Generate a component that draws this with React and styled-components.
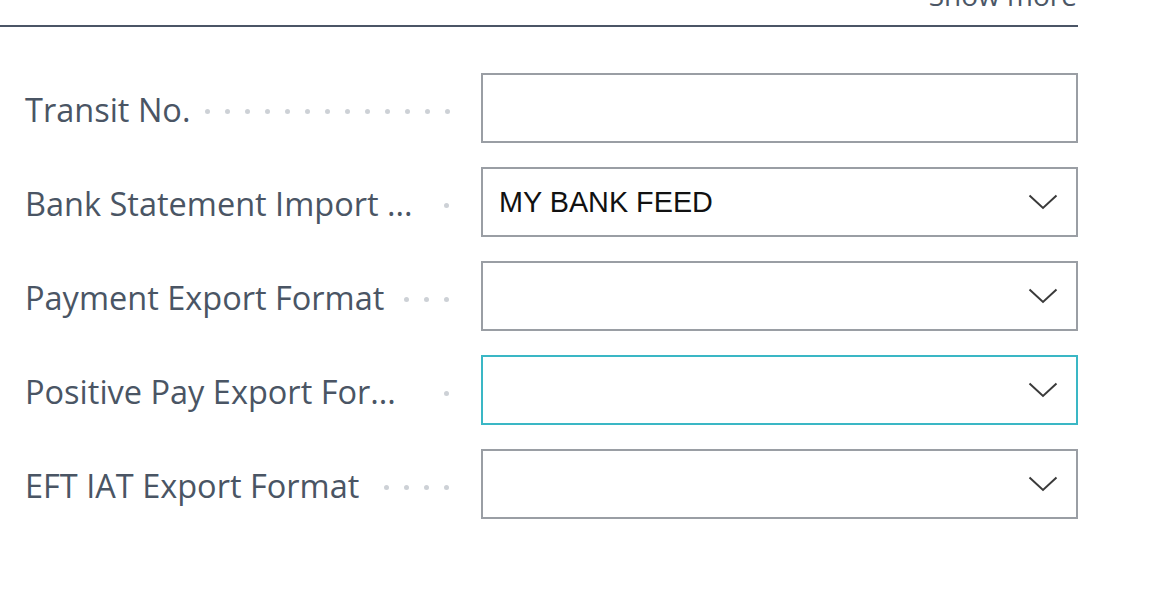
import React from "react";
import styled, { createGlobalStyle } from "styled-components";

const Global = createGlobalStyle`
  html, body { margin: 0; padding: 0; background: #ffffff; }
  body { font-family: "Open Sans", "Noto Sans", sans-serif; overflow: hidden; }
`;

const Page = styled.div`
  width: 1078px;
`;

const Header = styled.div`
  display: flex;
  justify-content: flex-end;
  height: 25px;
  border-bottom: 2px solid #4b5566;
  overflow: hidden;
`;

const ShowMore = styled.span`
  display: block;
  font-size: 28px;
  line-height: 32px;
  margin-top: -21px;
  margin-right: 1px;
  color: #4c5766;
`;

const Form = styled.div`
  display: flex;
  flex-direction: column;
  gap: 24px;
  padding: 46px 0 0 25px;
`;

const Row = styled.div`
  display: grid;
  grid-template-columns: 1fr 597px;
  column-gap: 29px;
  height: 70px;
  align-items: center;
`;

const LabelCell = styled.div`
  display: flex;
  align-items: center;
  min-width: 0;
  height: 100%;
`;

const LabelText = styled.span`
  font-size: 32.5px;
  color: #4a5564;
  white-space: nowrap;
  position: relative;
  top: 1px;
`;

const Leader = styled.div`
  flex: 1;
  display: flex;
  justify-content: flex-end;
  align-items: center;
  margin-top: 6px;
  padding-right: 3px;
`;

const Dot = styled.span`
  width: 5px;
  height: 5px;
  border-radius: 50%;
  background: #cdd1d6;
  margin-left: 15px;
  flex-shrink: 0;
`;

const Field = styled.div`
  box-sizing: border-box;
  height: 70px;
  border: 2px solid ${(p) => (p.$focused ? "#3ab7c5" : "#9a9ea4")};
  display: flex;
  align-items: center;
  justify-content: space-between;
  padding: 0 18px 0 16px;
  background: #fff;
`;

const Value = styled.span`
  font-family: "Liberation Sans", Arial, sans-serif;
  font-size: 28.8px;
  color: #111;
`;

const Chevron = () => (
  <svg width="30" height="16" viewBox="0 0 30 16" fill="none">
    <polyline points="1.5,1.5 15,14 28.5,1.5" stroke="#3a3a3a" strokeWidth="2" />
  </svg>
);

const rows = [
  { label: "Transit No.", dots: 13, dropdown: false },
  { label: "Bank Statement Import ...", dots: 1, value: "MY BANK FEED", dropdown: true },
  { label: "Payment Export Format", dots: 3, dropdown: true },
  { label: "Positive Pay Export For...", dots: 1, dropdown: true, focused: true },
  { label: "EFT IAT Export Format", dots: 4, dropdown: true },
];

export default function App() {
  return (
    <>
      <Global />
      <Page>
        <Header>
          <ShowMore>Show more</ShowMore>
        </Header>
        <Form>
          {rows.map((r) => (
            <Row key={r.label}>
              <LabelCell>
                <LabelText>{r.label}</LabelText>
                <Leader>
                  {Array.from({ length: r.dots }, (_, i) => (
                    <Dot key={i} />
                  ))}
                </Leader>
              </LabelCell>
              <Field $focused={r.focused}>
                <Value>{r.value || ""}</Value>
                {r.dropdown && <Chevron />}
              </Field>
            </Row>
          ))}
        </Form>
      </Page>
    </>
  );
}
